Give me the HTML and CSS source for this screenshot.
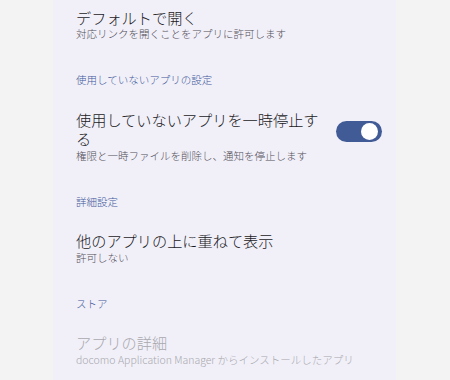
FILE: index.html
```html
<!DOCTYPE html>
<html lang="ja">
<head>
<meta charset="utf-8">
<link rel="stylesheet" href="styles.css">
</head>
<body>
<div class="frame">
  <aside class="side"></aside>
  <main class="list">
    <div class="item first">
      <div class="text">
        <div class="title">デフォルトで開く</div>
        <div class="summary">対応リンクを開くことをアプリに許可します</div>
      </div>
    </div>
    <div class="header">使用していないアプリの設定</div>
    <div class="item">
      <div class="text">
        <div class="title">使用していないアプリを一時停止する</div>
        <div class="summary">権限と一時ファイルを削除し、通知を停止します</div>
      </div>
      <div class="switch"><span class="thumb"></span></div>
    </div>
    <div class="header">詳細設定</div>
    <div class="item">
      <div class="text">
        <div class="title">他のアプリの上に重ねて表示</div>
        <div class="summary">許可しない</div>
      </div>
    </div>
    <div class="header">ストア</div>
    <div class="item disabled">
      <div class="text">
        <div class="title">アプリの詳細</div>
        <div class="summary">docomo Application Manager からインストールしたアプリ</div>
      </div>
    </div>
  </main>
  <aside class="side"></aside>
</div>
</body>
</html>
```

FILE: styles.css
```css
html, body {
  margin: 0;
  padding: 0;
  width: 450px;
  height: 380px;
  overflow: hidden;
  background: #f3f3f3;
  font-family: "Noto Sans CJK JP", "Noto Sans", sans-serif;
}
.frame {
  display: flex;
  height: 380px;
}
.side {
  width: 53px;
  flex: none;
  background: #f3f3f3;
}
.side:last-child {
  width: 54px;
}
.list {
  flex: 1;
  background: #f1f0f8;
  padding: 0 14px 0 23px;
  display: flex;
  flex-direction: column;
}
.item {
  display: flex;
  align-items: flex-start;
  padding: 11px 0;
}
.item.first {
  padding-top: 7.5px;
}
.text {
  flex: 1;
  min-width: 0;
}
.title {
  font-size: 15.2px;
  font-weight: 300;
  line-height: 19.5px;
  color: #1a191d;
}
.summary {
  font-size: 10.5px;
  font-weight: 300;
  line-height: 14px;
  color: #524f58;
}
.header {
  font-size: 10.5px;
  font-weight: 300;
  line-height: 14px;
  color: #41589a;
  padding: 21px 0 11.5px;
}
.switch {
  flex: none;
  width: 46px;
  height: 21px;
  border-radius: 11px;
  background: #415b97;
  margin: 11px 0 0 14px;
  display: flex;
  align-items: center;
  justify-content: flex-end;
  padding-right: 4px;
  box-sizing: border-box;
}
.thumb {
  width: 17px;
  height: 17px;
  border-radius: 50%;
  background: #ffffff;
}
.disabled .title,
.disabled .summary {
  color: #a9a8af;
}
```
